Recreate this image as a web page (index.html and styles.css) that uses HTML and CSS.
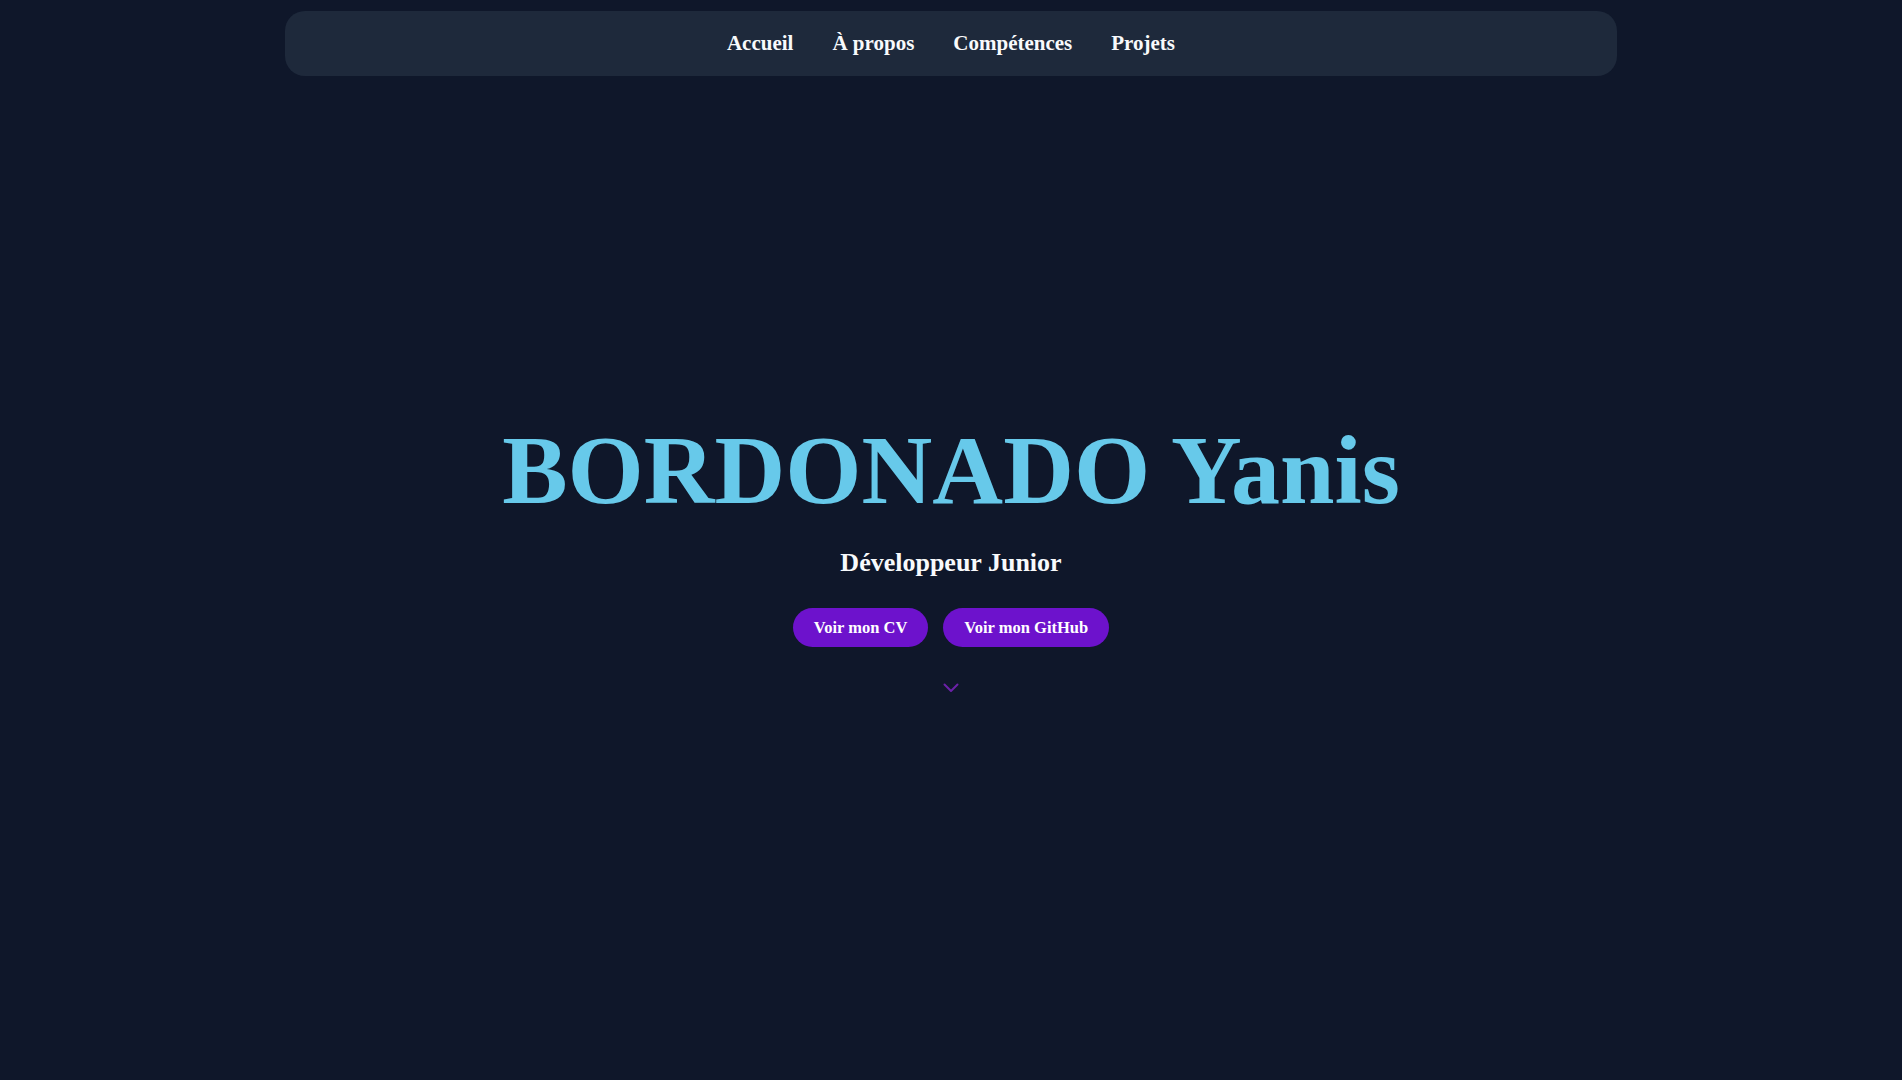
FILE: index.html
```html
<!DOCTYPE html>
<html lang="fr">
<head>
    <meta charset="UTF-8">
    <meta name="viewport" content="width=device-width, initial-scale=1.0">
    <title>BORDONADO Yanis - Portfolio</title>
    <link rel="stylesheet" href="styles.css">
</head>
<body>
    <header class="header">
        <nav class="navbar">
            <a href="#accueil" class="nav-link">Accueil</a>
            <a href="#apropos" class="nav-link">À propos</a>
            <a href="#competences" class="nav-link">Compétences</a>
            <a href="#projets" class="nav-link">Projets</a>
        </nav>
    </header>

    <section class="hero" id="accueil">
        <h1 class="hero-title">BORDONADO Yanis</h1>
        <p class="hero-subtitle">Développeur Junior</p>
        <div class="hero-buttons">
            <a href="#" class="btn">Voir mon CV</a>
            <a href="#" class="btn">Voir mon GitHub</a>
        </div>
        <a href="#apropos" class="scroll-down" aria-label="Descendre">
            <svg width="16" height="10" viewBox="0 0 16 10" fill="none">
                <polyline points="1.5,1.5 8,8 14.5,1.5" stroke="currentColor" stroke-width="2" stroke-linecap="round" stroke-linejoin="round"/>
            </svg>
        </a>
    </section>
</body>
</html>
```

FILE: styles.css
```css
:root {
    --color-bg: #0f172a;
    --color-nav: #1e293b;
    --color-text: #f8fafc;
    --color-accent: #67c9ea;
    --color-button: #6d12cc;
    --color-chevron: #6b21a8;
    --font-family: 'Liberation Serif', 'DejaVu Serif', serif;
}

* {
    box-sizing: border-box;
}

body {
    margin: 0;
    padding: 0;
    background: var(--color-bg);
    color: var(--color-text);
    font-family: var(--font-family);
    overflow: hidden;
}

.header {
    padding-top: 11px;
}

.navbar {
    width: 70%;
    height: 65px;
    margin: 0 auto;
    background: var(--color-nav);
    border-radius: 20px;
    display: flex;
    justify-content: center;
    align-items: center;
    gap: 39px;
}

.nav-link {
    color: var(--color-text);
    text-decoration: none;
    font-size: 21px;
    font-weight: bold;
}

.hero {
    min-height: calc(100vh - 76px);
    padding-bottom: 49px;
    display: flex;
    flex-direction: column;
    justify-content: center;
    align-items: center;
    text-align: center;
}

.hero-title {
    margin: 0;
    font-size: 98px;
    line-height: 1.15;
    font-weight: bold;
    color: var(--color-accent);
}

.hero-subtitle {
    margin: 20px 0 0;
    font-size: 26px;
    line-height: 1.2;
    font-weight: bold;
}

.hero-buttons {
    margin-top: 30px;
    display: flex;
    gap: 15px;
}

.btn {
    display: block;
    padding: 10px 21px;
    line-height: 19px;
    font-size: 16.5px;
    font-weight: bold;
    color: #fff;
    background: var(--color-button);
    border-radius: 999px;
    text-decoration: none;
}

.scroll-down {
    margin-top: 36px;
    color: var(--color-chevron);
    line-height: 0;
}
```
